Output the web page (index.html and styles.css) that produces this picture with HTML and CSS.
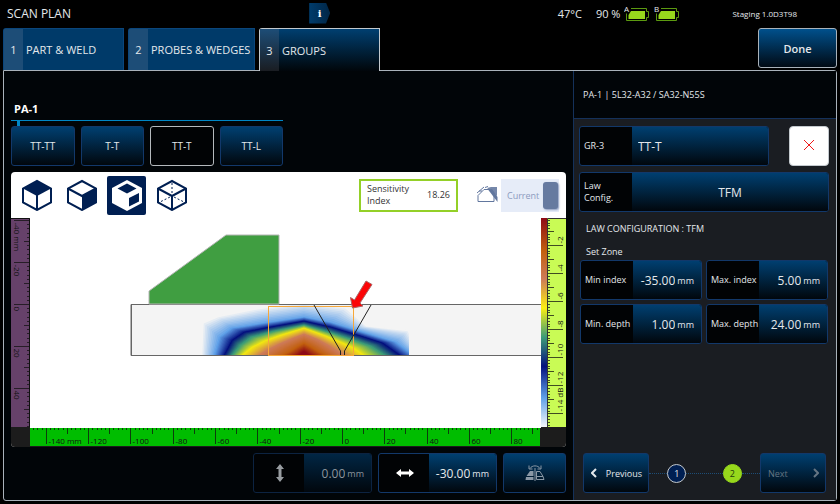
FILE: index.html
```html
<!DOCTYPE html>
<html lang="en">
<head>
    <meta charset="UTF-8">
    <meta name="viewport" content="width=device-width, initial-scale=1.0">
    <title>Scan Plan</title>
    <link rel="stylesheet" href="styles.css">
</head>
<body>
    <header class="topbar">
        <h1>SCAN PLAN</h1>
        <button class="info" aria-label="Information">i</button>
        <div class="status">
            <span class="temp">47°C</span>
            <span>90 %</span>
            <svg class="battery" viewBox="0 0 26 20" width="26" height="20">
                <text x="0" y="9">A</text>
                <path d="M7 5.500h15.500v3h2v6h-2v3h-20v-7" fill="none" stroke="#5c9a10"/>
                <path d="M7 8h14v8H4.500v-4z" fill="#97d81c"/>
            </svg>
            <svg class="battery" viewBox="0 0 26 20" width="26" height="20">
                <text x="0" y="9">B</text>
                <path d="M7 5.500h15.500v3h2v6h-2v3h-20v-7" fill="none" stroke="#5c9a10"/>
                <path d="M7 8h14v8H4.500v-4z" fill="#97d81c"/>
            </svg>
            <span class="version">Staging 1.0D3T98</span>
        </div>
    </header>

    <nav class="tabs">
        <button class="tab"><span class="tab-num">1</span>PART &amp; WELD</button>
        <button class="tab tab-wide"><span class="tab-num">2</span>PROBES &amp; WEDGES</button>
        <button class="tab active"><span class="tab-num">3</span>GROUPS</button>
        <button class="done">Done</button>
    </nav>

    <main class="panel">
        <section class="workspace">
            <div class="probe">
                <h2>PA-1</h2>
                <div class="groups">
                    <button class="btn">TT-TT</button>
                    <button class="btn">T-T</button>
                    <button class="btn selected">TT-T</button>
                    <button class="btn">TT-L</button>
                </div>
            </div>

            <div class="view">
                <div class="toolbar">
                    <button class="cube" aria-label="Top view">
                        <svg viewBox="0 0 32 32" width="32" height="32">
                            <path d="M16 2 30 9.500v14L16 31 2 23.500v-14z" fill="#fff" stroke="#001f52" stroke-width="2"/>
                            <path d="M16 2 30 9.500 16 17 2 9.500z" fill="#001f52"/>
                            <path d="M16 16v14" stroke="#001f52" stroke-width="2"/>
                        </svg>
                    </button>
                    <button class="cube" aria-label="Side view">
                        <svg viewBox="0 0 32 32" width="32" height="32">
                            <path d="M16 2 30 9.500v14L16 31 2 23.500v-14z" fill="#fff" stroke="#001f52" stroke-width="2"/>
                            <path d="M30 9.500v14L16 31V17z" fill="#001f52"/>
                            <path d="M2 9.500 16 17 30 9.500" fill="none" stroke="#001f52" stroke-width="2"/>
                        </svg>
                    </button>
                    <button class="cube active" aria-label="End view">
                        <svg viewBox="0 0 32 32" width="32" height="32">
                            <path d="M16 1 31 9v15L16 32 1 24V9z" fill="#fff"/>
                            <path d="M16 4.500 25.500 9.500 16 14.500 6.500 9.500z" fill="#001f52"/>
                            <path d="M28 14v8.500L18 27.500V19z" fill="#001f52"/>
                        </svg>
                    </button>
                    <button class="cube" aria-label="3D view">
                        <svg viewBox="0 0 32 32" width="32" height="32" fill="none" stroke="#001f52" stroke-width="2">
                            <path d="M16 2 30 9.500v14L16 31 2 23.500v-14z"/>
                            <path d="M2 9.500 16 17 30 9.500M16 17v14"/>
                            <path d="M16 4v11M5 22.500l9-4.500M27 22.500 18 18" stroke-width="1" stroke-dasharray="2 2"/>
                        </svg>
                    </button>

                    <div class="sensitivity"><span>Sensitivity Index</span><b>18.26</b></div>
                    <svg class="overlay-icon" viewBox="0 0 22 18" width="22" height="18">
                        <path d="M1 9.500 7 3.500h7l3 5v7H1z" fill="none" stroke="#62779e" stroke-width="1"/>
                        <path d="M0 7 7 1M2 5h3M8 1.500 11 .5" stroke="#62779e" fill="none"/>
                        <path d="M10 2 14 1h6v9z" fill="#7587aa"/>
                        <path d="M11 3.500 20.500 16v-5L15 3z" fill="#62779e"/>
                    </svg>
                    <label class="switch">
                        <input type="checkbox" checked>
                        <span>Current</span>
                    </label>
                </div>

                <svg class="plot" viewBox="0 0 555 229">
                    <defs>
                        <linearGradient id="scale" x1="0" y1="0" x2="0" y2="1">
                            <stop offset="0" stop-color="#8e0a16"/>
                            <stop offset=".16" stop-color="#c2600f"/>
                            <stop offset=".29" stop-color="#cd7a58"/>
                            <stop offset=".43" stop-color="#fbee12"/>
                            <stop offset=".57" stop-color="#3c9c78"/>
                            <stop offset=".71" stop-color="#04107e"/>
                            <stop offset=".86" stop-color="#5fa0e8"/>
                            <stop offset="1" stop-color="#f4f7fb"/>
                        </linearGradient>
                        <clipPath id="beam-area"><path d="M120 87h278v50H120z"/></clipPath>
                    </defs>
                    <rect width="555" height="229" fill="#1c1c1c"/>
                    <rect x="19" width="511" height="210" fill="#fff"/>
                    <path d="M530 86.500H120v51h410" fill="#f4f4f4" stroke="#666"/>
                    <g id="beam" clip-path="url(#beam-area)"></g>
                    <path d="M530 86.500H120.500v51H530" fill="none" stroke="#666"/>
                    <path d="M138 86V73L215 17h53v69z" fill="#409e41" stroke="#b5b5b5"/>
                    <rect x="257.500" y="88.500" width="85" height="49" fill="none" stroke="#f7a83a"/>
                    <path d="M303 87 329.500 133v4M360 87 333.500 133v4" fill="none" stroke="#222"/>
                    <path d="M341.500 90 339.500 79.500 343.500 82 355 63 361 66.500 349 85 352 88z" fill="#fb0507" stroke="#a66"/>

                    <rect width="19" height="209" fill="#66416a"/>
                    <path d="M0 .5h18.500V209" fill="none" stroke="#111"/>
                    <rect x="19" y="210" width="510" height="18" fill="#00bd00"/>
                    <rect x="530" width="6" height="209" fill="url(#scale)"/>
                    <rect x="536" width="19" height="209" fill="#c9fb55"/>
                    <path d="M555 .5H536.500V209" fill="none" stroke="#333"/>
                    <g id="ruler-x" class="ruler"></g>
                    <g id="ruler-y" class="ruler"></g>
                    <g id="ruler-db" class="ruler"></g>
                </svg>
            </div>

            <div class="actions">
                <div class="field disabled">
                    <label for="move-y" aria-label="Vertical position">
                        <svg viewBox="0 0 18 18" width="18" height="18"><path d="M9 0l4 5h-2.500v8H13l-4 5-4-5h2.500V5H5z" fill="currentColor"/></svg>
                    </label>
                    <div class="value"><input type="text" id="move-y" value="0.00" disabled><span>mm</span></div>
                </div>
                <div class="field">
                    <label for="move-x" aria-label="Horizontal position">
                        <svg viewBox="0 0 18 18" width="18" height="18"><path d="M0 9l5-4v2.500h8V5l5 4-5 4v-2.500H5V13z" fill="currentColor"/></svg>
                    </label>
                    <div class="value"><input type="text" id="move-x" value="-30.00"><span>mm</span></div>
                </div>
                <button class="btn" aria-label="Flip wedge">
                    <svg viewBox="0 0 20 18" width="20" height="18" fill="none" stroke="#8a98a6">
                        <path d="M5 4.500C7 1 13 1 15 4.500M4 1.500v3.500h3.500M16 1.500v3.500h-3.500M10 4v13"/>
                        <path d="M8.500 7v5H1.500L5 7zM1 13h7.500v3H.5z" fill="#8a98a6" stroke="none"/>
                        <path d="M11.500 7.500H15l3 5 1 3h-7.500zM12 12.500h6"/>
                    </svg>
                </button>
            </div>
        </section>

        <aside class="sidebar">
            <div class="sidebar-title">PA-1 | 5L32-A32 / SA32-N55S</div>
            <form class="config">
                <div class="row">
                    <div class="field">
                        <label for="group-name">GR-3</label>
                        <div class="value left"><input type="text" id="group-name" value="TT-T"></div>
                    </div>
                    <button type="button" class="delete" aria-label="Delete group">
                        <svg viewBox="0 0 12 12" width="12" height="12"><path d="M1 1l10 10M11 1 1 11" stroke="#f01818"/></svg>
                    </button>
                </div>
                <div class="field">
                    <label for="law">Law Config.</label>
                    <div class="value full"><select id="law"><option>TFM</option></select></div>
                </div>
                <h3>LAW CONFIGURATION : TFM</h3>
                <fieldset>
                    <legend>Set Zone</legend>
                    <div class="zone">
                        <div class="field">
                            <label for="min-index">Min index</label>
                            <div class="value"><input type="text" id="min-index" value="-35.00"><span>mm</span></div>
                        </div>
                        <div class="field">
                            <label for="max-index">Max. index</label>
                            <div class="value"><input type="text" id="max-index" value="5.00"><span>mm</span></div>
                        </div>
                        <div class="field">
                            <label for="min-depth">Min. depth</label>
                            <div class="value"><input type="text" id="min-depth" value="1.00"><span>mm</span></div>
                        </div>
                        <div class="field">
                            <label for="max-depth">Max. depth</label>
                            <div class="value"><input type="text" id="max-depth" value="24.00"><span>mm</span></div>
                        </div>
                    </div>
                </fieldset>
            </form>
            <div class="pager">
                <button class="btn">
                    <svg viewBox="0 0 6 10" width="6" height="10"><path d="M5 1 1 5l4 4" fill="none" stroke="currentColor" stroke-width="2"/></svg>
                    Previous
                </button>
                <div class="steps">
                    <i></i><span class="step">1</span><i class="long"></i><span class="step current">2</span><i></i>
                </div>
                <button class="btn" disabled>
                    Next
                    <svg viewBox="0 0 6 10" width="6" height="10"><path d="M1 1l4 4-4 4" fill="none" stroke="currentColor" stroke-width="2"/></svg>
                </button>
            </div>
        </aside>
    </main>

    <script src="plot.js"></script>
</body>
</html>
```
FILE: styles.css
```css
* {
    box-sizing: border-box;
}
body {
    margin: 0;
    padding: 0 3px 3px;
    min-height: 100vh;
    display: flex;
    flex-direction: column;
    background: #000;
    color: #e4e8ec;
    font-family: "Open Sans", "Noto Sans", sans-serif;
    font-size: 9px;
}
h1, h2, h3 {
    margin: 0;
}
button, input, select {
    font-family: inherit;
    font-size: 11px;
    color: inherit;
    padding: 0;
    margin: 0;
}
button {
    cursor: pointer;
}

/* top bar */
.topbar {
    display: flex;
    align-items: center;
    height: 28px;
    padding: 0 40px 2px 4px;
}
.topbar h1 {
    font-size: 12px;
    font-weight: 400;
    flex: 0 0 38%;
}
.info {
    width: 21px;
    height: 21px;
    margin-left: 2px;
    border: none;
    background: linear-gradient(90deg, #003c6c, #012646);
    clip-path: polygon(0 0, 80% 0, 100% 50%, 80% 100%, 0 100%);
    font-family: "DejaVu Serif", serif;
    font-size: 10px;
    font-weight: 700;
    color: #fff;
}
.status {
    display: flex;
    align-items: center;
    gap: 4px;
    margin-left: auto;
    font-size: 11px;
}
.temp {
    margin-right: 10px;
}
.battery text {
    font-size: 8px;
    fill: #e4e8ec;
}
.version {
    margin-left: 48px;
    font-size: 8px;
}

/* tabs */
.tabs {
    display: flex;
    align-items: flex-start;
    gap: 4px;
}
.tab {
    display: flex;
    align-items: center;
    gap: 3px;
    width: 121px;
    height: 42px;
    border: 1px solid #0b467c;
    border-bottom: none;
    border-radius: 3px 0 0 0;
    background: #003a69;
    text-align: left;
    white-space: nowrap;
}
.tab-wide {
    width: 127px;
}
.tab-num {
    display: flex;
    align-items: center;
    justify-content: center;
    width: 19px;
    height: 100%;
    background: #1d4d77;
}
.tab.active {
    position: relative;
    height: 43px;
    margin-bottom: -1px;
    border-color: #c3c9ce;
    background: linear-gradient(#003f70, #01060a);
}
.tab.active .tab-num {
    background: linear-gradient(#1d4d77, #1a1d22);
}
.done {
    width: 79px;
    height: 40px;
    margin-left: auto;
    border: 1px solid #a9b2ba;
    border-radius: 3px;
    background: linear-gradient(#00508c, #010a14);
    font-weight: 600;
}

/* main panel */
.panel {
    flex: 1;
    display: flex;
    border: 1px solid #a9b2ba;
    border-radius: 0 3px 3px 3px;
    background: #010508;
}
.workspace {
    flex: 1;
    min-width: 0;
    display: flex;
    flex-direction: column;
    gap: 6px;
    padding: 30px 7px 7px;
}
.probe {
    width: 272px;
}
.probe h2 {
    position: relative;
    padding: 0 3px 3px;
    border-bottom: 1px solid #0087c6;
    font-size: 11px;
    line-height: 16px;
    color: #fff;
}
.probe h2::after {
    content: "";
    position: absolute;
    left: 6px;
    top: 19px;
    width: 3px;
    height: 6px;
    background: #0087c6;
}
.groups {
    display: grid;
    grid-template-columns: repeat(4, 1fr);
    gap: 6px;
    margin-top: 5px;
}
.btn {
    height: 40px;
    border: 1px solid #12386a;
    border-radius: 3px;
    background: linear-gradient(#003f70, #01070d);
    font-size: 10px;
}
.btn.selected {
    border-color: #b4b9bd;
    background: #010305;
}

/* scan view */
.view {
    border-radius: 4px;
    background: #fff;
    overflow: hidden;
}
.toolbar {
    display: flex;
    align-items: center;
    gap: 6px;
    height: 46px;
    padding: 0 7px 0 6px;
}
.cube {
    display: flex;
    align-items: center;
    justify-content: center;
    width: 39px;
    height: 39px;
    border: none;
    border-radius: 2px;
    background: none;
}
.cube.active {
    background: #001f52;
}
.sensitivity {
    display: flex;
    align-items: center;
    justify-content: space-between;
    width: 99px;
    height: 33px;
    margin-left: auto;
    padding: 0 6px;
    border: 2px solid #94d028;
    color: #333;
    line-height: 12px;
}
.sensitivity span {
    width: 52px;
}
.sensitivity b {
    font-weight: 400;
}
.overlay-icon {
    margin-left: 13px;
}
.switch {
    display: flex;
    flex-direction: row-reverse;
    align-items: center;
    justify-content: space-between;
    width: 58px;
    height: 33px;
    margin-left: -4px;
    padding: 0 1px 0 6px;
    background: #e6ecf8;
    color: #8c9bbf;
}
.switch input {
    appearance: none;
    width: 15px;
    height: 27px;
    margin: 0;
    border-radius: 3px;
    background: #667aa0;
    box-shadow: 1px 1px 2px #8c9bbf;
}
.plot {
    display: block;
    width: 100%;
}
.ruler {
    font-size: 8px;
    fill: #111;
    stroke-width: 1;
}
.ruler path {
    fill: none;
    stroke: #111;
    stroke-opacity: 0.75;
}

/* label + value boxes */
.field {
    display: flex;
    height: 40px;
    border: 1px solid #12386a;
    border-radius: 3px;
    background: #010305;
    overflow: hidden;
}
.field label {
    display: flex;
    align-items: center;
    flex: 0 0 52px;
    padding-left: 4px;
    line-height: 12px;
    white-space: nowrap;
}
.value {
    flex: 1;
    min-width: 0;
    display: flex;
    align-items: center;
    gap: 2px;
    padding-right: 7px;
    background: linear-gradient(#003f70, #01070d);
}
.value input, .value select {
    flex: 1;
    width: 100%;
    min-width: 0;
    border: none;
    outline: none;
    background: none;
    font-size: 12px;
    text-align: right;
}
.value select {
    appearance: none;
    text-align: center;
    text-align-last: center;
}
.value.full {
    padding-right: 0;
}
.value.left input {
    padding-left: 6px;
    text-align: left;
}
.actions {
    display: flex;
    justify-content: flex-end;
    gap: 6px;
}
.actions .field {
    width: 119px;
}
.actions .field label {
    flex-basis: 50px;
    justify-content: center;
    padding-left: 2px;
    color: #fff;
}
.actions .btn {
    width: 63px;
}
.actions svg {
    vertical-align: middle;
}
.field.disabled {
    border-color: #0c2341;
}
.field.disabled .value {
    background: linear-gradient(#012644, #01070d);
    color: #8c959d;
}
.field.disabled label {
    color: #989da1;
}

/* sidebar */
.sidebar {
    flex: 0 0 263px;
    display: flex;
    flex-direction: column;
    border-left: 1px solid #14315a;
    background: #1a1d22;
}
.sidebar-title {
    height: 48px;
    padding: 0 9px;
    border-bottom: 1px solid #14315a;
    background: #010508;
    line-height: 48px;
}
.config {
    display: flex;
    flex-direction: column;
    padding: 7px 7px 0 5px;
}
.row {
    display: flex;
    justify-content: space-between;
    margin-bottom: 6px;
}
.row .field {
    width: 190px;
}
.config > .field label {
    white-space: normal;
}
.delete {
    width: 40px;
    height: 40px;
    border: 1px solid #c3c9ce;
    border-radius: 4px;
    background: #fff;
}
.config h3 {
    padding: 10px 7px 0;
    font-size: 9px;
    font-weight: 400;
    line-height: 14px;
}
fieldset {
    margin: 0;
    padding: 0 1px;
    border: none;
    min-width: 0;
}
legend {
    padding: 8px 6px 0;
    line-height: 16px;
}
.zone {
    display: grid;
    grid-template-columns: 1fr 1fr;
    gap: 4px;
}
.pager {
    display: flex;
    align-items: center;
    margin-top: auto;
    padding: 0 10px 7px 9px;
}
.pager .btn {
    display: flex;
    align-items: center;
    justify-content: space-between;
    width: 66px;
    padding: 0 6px 0 7px;
    font-size: 9px;
}
.pager .btn:disabled {
    color: #657583;
}
.steps {
    flex: 1;
    display: flex;
    align-items: center;
}
.steps i {
    flex: 1;
    border-top: 1px dotted #1d4d77;
}
.steps .long {
    flex: 2;
}
.step {
    width: 19px;
    height: 19px;
    border: 1px solid #c3c9ce;
    border-radius: 50%;
    background: #001f52;
    line-height: 17px;
    text-align: center;
}
.step.current {
    border-color: #97d81c;
    background: #97d81c;
    color: #24400a;
}
```
FILE: plot.js
```javascript
const NS = "http://www.w3.org/2000/svg";

function add(parent, tag, attrs, text) {
    const el = document.createElementNS(NS, tag);
    for (const key in attrs) el.setAttribute(key, attrs[key]);
    if (text) el.textContent = text;
    parent.appendChild(el);
}

// beam coverage contours, from the outer edge to the hot spot
const contours = [
    { color: [244, 244, 244], pts: [[190,137],[191,104],[206,98],[246,90],[293,84],[336,89],[356,108],[398,112],[408,137]] },
    { color: [95, 160, 232], pts: [[203,137],[208,119],[220,110],[252,105],[293,99],[319,104],[345,112],[385,124],[403,137]] },
    { color: [4, 16, 126], pts: [[213,137],[221,122],[233,114],[259,109],[293,103],[320,109],[350,118],[372,125],[389,137]] },
    { color: [60, 156, 120], pts: [[221,137],[229,127],[240,119],[263,113],[293,107],[318,114],[340,121],[360,128],[374,137]] },
    { color: [242, 230, 17], pts: [[231,137],[241,129],[253,123],[270,117],[293,110],[315,118],[332,125],[343,130],[353,137]] },
    { color: [205, 122, 88], pts: [[248,137],[258,131],[268,126],[280,121],[293,116],[306,121],[317,127],[325,132],[333,137]] },
    { color: [194, 96, 15], pts: [[271,137],[277,134],[282,131],[287,128],[293,125],[299,128],[304,131],[309,134],[315,137]] },
    { color: [142, 10, 22], pts: [[287,137],[289,136],[290,135],[291,134],[293,133],[295,134],[296,135],[297,136],[299,137]] }
];

const beam = document.getElementById("beam");
const steps = 10;
for (let i = 0; i < contours.length - 1; i++) {
    for (let s = 0; s <= steps; s++) {
        const mix = (a, b) => a + (b - a) * s / steps;
        const a = contours[i], b = contours[i + 1];
        const points = a.pts.map((p, n) => mix(p[0], b.pts[n][0]) + "," + mix(p[1], b.pts[n][1]));
        const color = a.color.map((c, n) => Math.round(mix(c, b.color[n])));
        add(beam, "polygon", { points: points.join(" "), fill: `rgb(${color})` });
    }
}

// index ruler, a tick every 2 mm
const rulerX = document.getElementById("ruler-x");
for (let mm = -146; mm <= 92; mm += 2) {
    const x = Math.round(331 + mm * 2.116) + 0.5;
    const len = mm % 20 === 0 ? 16 : mm % 10 === 0 ? 6 : 2;
    add(rulerX, "path", { d: `M${x} 210v${len}` });
    if (mm % 20 === 0) add(rulerX, "text", { x: x + 2, y: 226 }, mm + (mm === -140 ? " mm" : ""));
}

// depth ruler
const rulerY = document.getElementById("ruler-y");
for (let mm = -40; mm <= 58; mm += 2) {
    const y = Math.round(86 + mm * 2.1) + 0.5;
    const len = mm % 20 === 0 ? 15 : mm % 10 === 0 ? 5 : 2;
    add(rulerY, "path", { d: `M18 ${y}h-${len}` });
    if (mm % 20 === 0) add(rulerY, "text", { transform: `translate(3 ${y + 2}) rotate(90)` }, mm + (mm === -40 ? " mm" : ""));
}

// amplitude ruler, a tick every 0.2 dB
const rulerDb = document.getElementById("ruler-db");
for (let n = 1; n <= 74; n++) {
    const y = Math.round(n * 2.805 - 1) + 0.5;
    const len = n % 10 === 0 ? 15 : n % 5 === 0 ? 6 : 2;
    add(rulerDb, "path", { d: `M537 ${y}h${len}` });
    if (n % 10 === 0) add(rulerDb, "text", { transform: `translate(552 ${y - 2}) rotate(-90)` }, -n / 5 + (n === 70 ? " dB" : ""));
}
```
